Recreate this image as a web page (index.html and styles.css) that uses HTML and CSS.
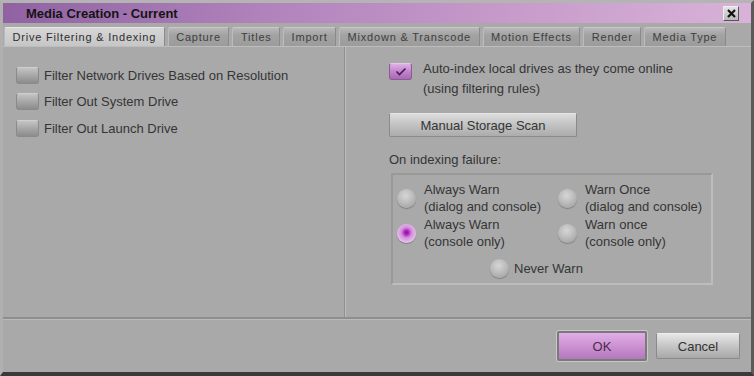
FILE: index.html
```html
<!DOCTYPE html>
<html>
<head>
<meta charset="utf-8">
<link rel="stylesheet" href="styles.css">
</head>
<body>
<div class="window">
  <div class="titlebar">
    <span class="title">Media Creation - Current</span>
    <span class="close"><svg width="11" height="9" viewBox="0 0 11 9"><path d="M2 1 L9 8 M9 1 L2 8" stroke="#111" stroke-width="2.2"/></svg></span>
  </div>
  <div class="tabs">
    <div class="tab active">Drive Filtering &amp; Indexing</div>
    <div class="tab">Capture</div>
    <div class="tab">Titles</div>
    <div class="tab">Import</div>
    <div class="tab">Mixdown &amp; Transcode</div>
    <div class="tab">Motion Effects</div>
    <div class="tab">Render</div>
    <div class="tab">Media Type</div>
  </div>
  <div class="panel">
    <div class="left">
      <div class="check-row"><span class="box"></span>Filter Network Drives Based on Resolution</div>
      <div class="check-row"><span class="box"></span>Filter Out System Drive</div>
      <div class="check-row"><span class="box"></span>Filter Out Launch Drive</div>
    </div>
    <div class="right">
      <div class="auto-row">
        <span class="box checked"><svg width="12" height="9" viewBox="0 0 12 9"><path d="M1.5 4.5 L4.5 7.5 L10.5 1.5" fill="none" stroke="#4a1a5a" stroke-width="1.6"/></svg></span>
        <div class="auto-text">Auto-index local drives as they come online<br>(using filtering rules)</div>
      </div>
      <div class="scan-btn">Manual Storage Scan</div>
      <div class="fail-label">On indexing failure:</div>
      <div class="group">
        <div class="radio-grid">
          <div class="radio-row"><span class="radio"></span><span>Always Warn<br>(dialog and console)</span></div>
          <div class="radio-row"><span class="radio"></span><span>Warn Once<br>(dialog and console)</span></div>
          <div class="radio-row"><span class="radio on"></span><span>Always Warn<br>(console only)</span></div>
          <div class="radio-row"><span class="radio"></span><span>Warn once<br>(console only)</span></div>
        </div>
        <div class="radio-row never"><span class="radio"></span><span>Never Warn</span></div>
      </div>
    </div>
  </div>
  <div class="footer">
    <div class="btn ok">OK</div>
    <div class="btn cancel">Cancel</div>
  </div>
</div>
</body>
</html>
```
FILE: styles.css
```css
* { box-sizing: border-box; }
html, body { margin: 0; padding: 0; }
body {
  width: 754px; height: 376px; overflow: hidden;
  background: #a9a9a9;
  font-family: "Liberation Sans", Arial, sans-serif;
  color: #353535;
}
.window {
  width: 754px; height: 376px;
  background: #a9a9a9;
  border-top: 3px solid #b4b4b4;
  border-left: 3px solid #b0b0b0;
  border-right: 3px solid #5a5a5a;
  border-bottom: 4px solid #3a3a3a;
  display: flex; flex-direction: column;
}
.titlebar {
  height: 20px;
  background: linear-gradient(90deg, #9062a2 0%, #b083bc 35%, #c89ccb 70%, #d8b2d8 100%);
  display: flex; align-items: center; justify-content: space-between;
  padding: 0 12px 0 23px;
}
.title { font-weight: bold; font-size: 13px; color: #141414; }
.close {
  width: 16px; height: 15px;
  background: linear-gradient(#e4e4e4, #b8b8b8);
  border: 1px solid #555;
  border-top-color: #eee; border-left-color: #eee;
  display: flex; align-items: center; justify-content: center;
}
.tabs {
  display: flex; gap: 3px;
  margin-top: 4px; padding-left: 1px;
  height: 20px;
  border-bottom: 1px solid #bdbdbd;
}
.tab {
  font-size: 11px; letter-spacing: 0.8px;
  color: #3e3e3e;
  padding: 0 7.5px;
  display: flex; align-items: center;
  background: linear-gradient(#b8b8b8, #a2a2a2 40%, #9c9c9c);
  border-top: 1px solid #c8c8c8;
  border-left: 1px solid #bcbcbc;
  border-right: 1px solid #8a8a8a;
  border-radius: 2px 2px 0 0;
}
.tab.active {
  background: linear-gradient(#d6d6d6, #c6c6c6);
  color: #2e2e2e;
  border-top-color: #e6e6e6;
}
.panel {
  flex: 0 0 272px;
  display: flex;
  border-bottom: 2px solid #8e8e8e;
}
.left {
  width: 342px;
  padding: 15px 0 0 13px;
  border-right: 1px solid #8f8f8f;
}
.right {
  flex: 1;
  border-left: 1px solid #bfbfbf;
  padding: 12px 0 0 43px;
}
.check-row {
  display: flex; align-items: center;
  height: 26.5px;
  font-size: 13px; color: #353535;
}
.box {
  width: 23px; height: 17px;
  border-radius: 3px;
  margin-right: 5px;
  background: linear-gradient(#c4c4c4, #a4a4a4 55%, #8c8c8c);
  border: 1px solid #8a8a8a;
  border-top-color: #cfcfcf;
  flex: none;
}
.box.checked {
  background: linear-gradient(#e0b0e6, #c185ca 50%, #a86bb3);
  border-color: #8d5a96;
  border-top-color: #e8c4ec;
  display: flex; align-items: center; justify-content: center;
  margin-top: 4px;
  margin-right: 11px;
}
.auto-row { display: flex; align-items: flex-start; }
.auto-text { font-size: 13px; line-height: 20px; color: #353535; }
.scan-btn {
  width: 188px; height: 24px;
  margin-top: 14px;
  font-size: 13px; color: #353535;
  display: flex; align-items: center; justify-content: center;
  background: linear-gradient(#dcdcdc, #c2c2c2 50%, #acacac);
  border: 1px solid #8a8a8a;
  border-top-color: #e4e4e4;
  border-radius: 2px;
}
.fail-label { font-size: 13px; color: #353535; margin-top: 15px; height: 15px; line-height: 15px; }
.group {
  width: 322px; height: 112px;
  margin: 6px 0 0 2px;
  border: 2px solid #bdbdbd;
  border-top-color: #999;
  border-left-color: #999;
  padding: 6px 0 0 4px;
}
.radio-grid {
  display: grid;
  grid-template-columns: 161px 160px;
  row-gap: 1px;
}
.radio-row {
  display: flex; align-items: center;
  font-size: 13px; line-height: 17px; color: #353535;
}
.radio {
  width: 19px; height: 19px; border-radius: 50%;
  margin-right: 8px; flex: none;
  background: radial-gradient(circle at 45% 35%, #d6d6d6 0%, #bcbcbc 45%, #999 100%);
  box-shadow: 0 1px 1px rgba(0,0,0,0.25);
}
.radio.on {
  background: radial-gradient(circle at 50% 45%, #7a1a8a 0%, #b52ec4 18%, #d28adb 35%, #e7c2ea 70%, #d7a6dd 100%);
}
.never { margin: 9px 0 0 93px; }
.never .radio { margin-right: 5px; }
.footer {
  flex: 1;
  display: flex; align-items: center; justify-content: flex-end;
  gap: 9px;
  padding: 0 11px 0 0;
  border-top: 1px solid #bababa;
}
.btn {
  height: 26px;
  font-size: 13px;
  display: flex; align-items: center; justify-content: center;
  border-radius: 2px;
}
.ok {
  width: 90px; height: 30px;
  color: #4a2a50;
  background: linear-gradient(#e0aee6, #cc92d2 50%, #b377bc);
  border: 2px solid #7a7a7a;
  box-shadow: 0 0 0 1px #c8c8c8;
}
.cancel {
  width: 84px;
  color: #333;
  background: linear-gradient(#e6e6e6, #c6c6c6 50%, #a8a8a8);
  border: 1px solid #8a8a8a;
  border-top-color: #eee;
}
```
